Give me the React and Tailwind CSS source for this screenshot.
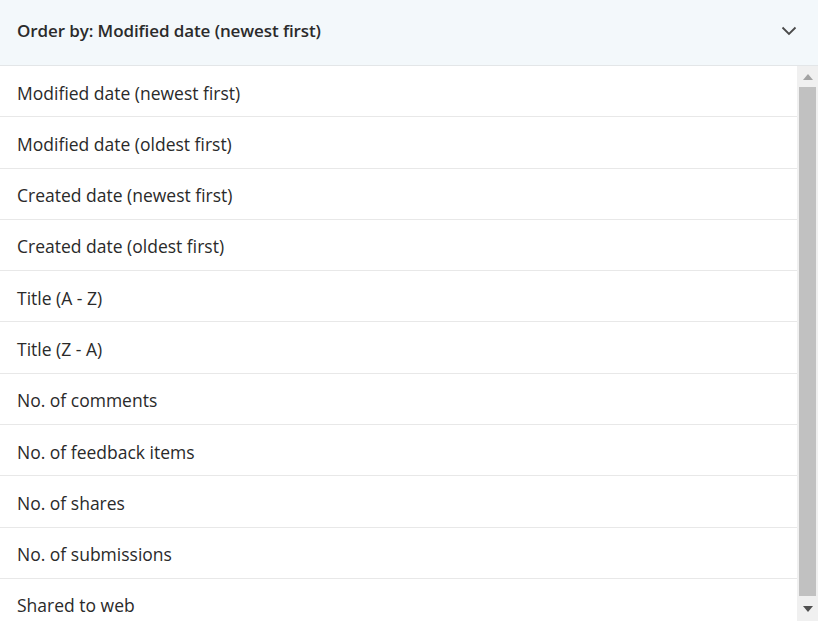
export default function App() {
  const items = [
    "Modified date (newest first)",
    "Modified date (oldest first)",
    "Created date (newest first)",
    "Created date (oldest first)",
    "Title (A - Z)",
    "Title (Z - A)",
    "No. of comments",
    "No. of feedback items",
    "No. of shares",
    "No. of submissions",
    "Shared to web",
  ];
  return (
    <div className="w-[818px] h-[621px] overflow-hidden bg-white flex flex-col" style={{ fontFamily: '"Open Sans", "Noto Sans", sans-serif' }}>
      <div className="h-[66px] shrink-0 bg-[#f3f8fb] border-b border-[#e3e6e8] flex items-center justify-between pl-[17px] pr-[21px] pb-[3px]">
        <span className="text-[17px] font-semibold text-[#2b2b2b] tracking-[-0.1px]">Order by: Modified date (newest first)</span>
        <svg width="16" height="10" viewBox="0 0 16 10" fill="none">
          <path d="M1.5 1.5 L8 8 L14.5 1.5" stroke="#4a4a4a" strokeWidth="1.8" />
        </svg>
      </div>
      <div className="flex flex-1 min-h-0">
        <div className="flex-1 overflow-hidden">
          {items.map((t, i) => (
            <div key={i} className="h-[51.3px] border-b border-[#e8e8e8] flex items-center pl-[17px] pt-[3px] text-[17.5px] text-[#2a2a2a]">
              {t}
            </div>
          ))}
        </div>
        <div className="w-[21px] shrink-0 bg-[#f0f0f0] flex flex-col items-center">
          <div className="h-[21px] w-full flex items-center justify-center">
            <svg width="10" height="6" viewBox="0 0 10 6"><path d="M0 6 L5 0 L10 6 Z" fill="#a3a3a3" /></svg>
          </div>
          <div className="flex-1 w-[17px] bg-[#c1c1c1]" />
          <div className="h-[25px] w-full flex items-center justify-center">
            <svg width="10" height="6" viewBox="0 0 10 6"><path d="M0 0 L10 0 L5 6 Z" fill="#505050" /></svg>
          </div>
        </div>
      </div>
    </div>
  );
}
